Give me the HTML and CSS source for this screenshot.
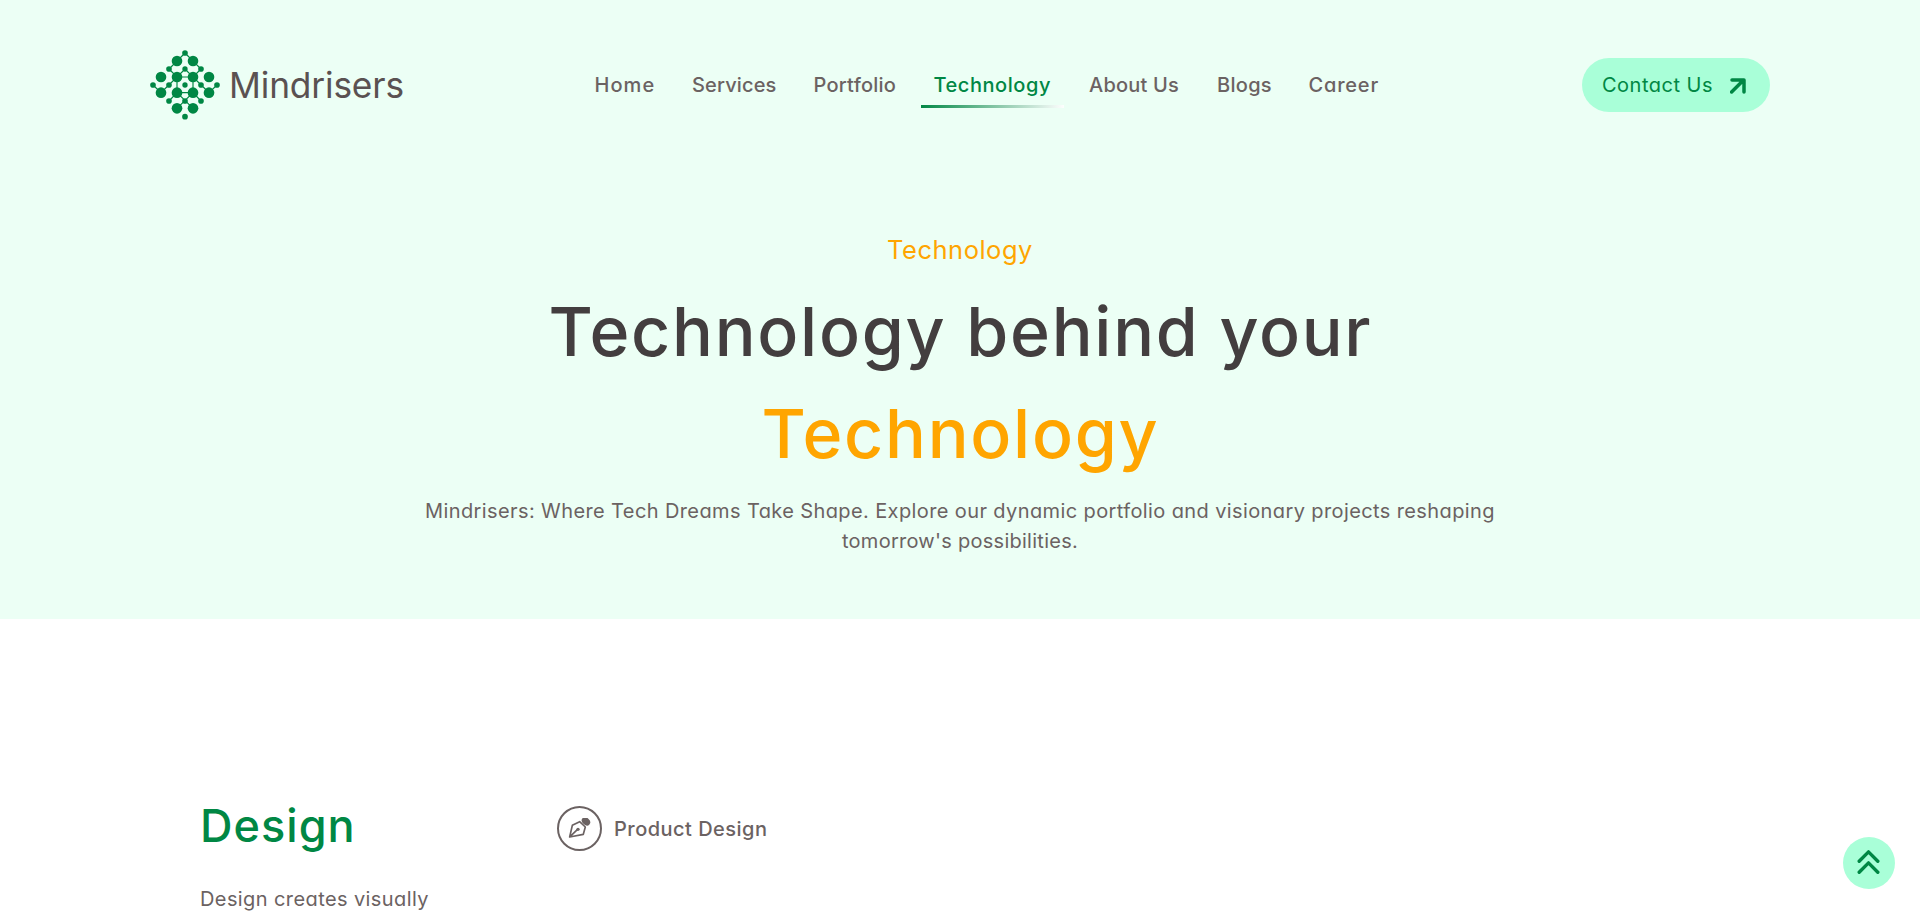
FILE: index.html
```html
<!DOCTYPE html>
<html lang="en">
<head>
<meta charset="utf-8">
<title>Mindrisers | Technology</title>
<link rel="stylesheet" href="styles.css">
</head>
<body>
<div class="hero">
  <header class="header">
    <a class="logo">
      <svg class="logo-mark" viewBox="15 15 210 210">
        <path class="links" d="M120 24 72 72 96 96M120 24l48 48-24 24M96 96l24-24 24 24M96 96h48v47H96zM24 120l24 23 48-47M216 120l-24 23-48-47M72 168l24-25 48 47M168 168l-24-25-48 47"/>
        <g class="dots">
          <circle cx="120" cy="24" r="8.5"/><circle cx="72" cy="72" r="8.5"/><circle cx="120" cy="72" r="8"/><circle cx="168" cy="72" r="8.5"/>
          <circle cx="24" cy="120" r="8.5"/><circle cx="72" cy="120" r="8.5"/><circle cx="120" cy="120" r="8"/><circle cx="168" cy="120" r="8.5"/><circle cx="216" cy="120" r="8.5"/>
          <circle cx="72" cy="168" r="8.5"/><circle cx="120" cy="168" r="8.5"/><circle cx="168" cy="168" r="8.5"/><circle cx="120" cy="215" r="8.5"/>
          <circle cx="96" cy="48" r="16"/><circle cx="144" cy="48" r="16"/>
          <circle cx="48" cy="96" r="16"/><circle cx="96" cy="96" r="16"/><circle cx="144" cy="96" r="16"/><circle cx="192" cy="96" r="16"/>
          <circle cx="48" cy="143" r="16"/><circle cx="96" cy="143" r="16"/><circle cx="144" cy="143" r="16"/><circle cx="192" cy="143" r="16"/>
          <circle cx="96" cy="190" r="16"/><circle cx="144" cy="190" r="16"/>
        </g>
      </svg>
      <span class="logo-text">Mindrisers</span>
    </a>
    <nav class="nav">
      <a class="nav-item home">Home</a>
      <a class="nav-item services">Services</a>
      <a class="nav-item portfolio">Portfolio</a>
      <a class="nav-item technology active">Technology</a>
      <a class="nav-item about">About Us</a>
      <a class="nav-item blogs">Blogs</a>
      <a class="nav-item career">Career</a>
    </nav>
    <a class="contact">
      <span>Contact Us</span>
      <svg class="contact-arrow" viewBox="0 0 16 16"><path d="M1.6 14 13.6 2M2 2h12v12"/></svg>
    </a>
  </header>
  <div class="intro">
    <p class="eyebrow">Technology</p>
    <h1 class="title">Technology behind your<br><span class="accent">Technology</span></h1>
    <p class="lead">Mindrisers: Where Tech Dreams Take Shape. Explore our dynamic portfolio and visionary projects reshaping<br><span class="lead-end">tomorrow's possibilities.</span></p>
  </div>
</div>
<section class="stack">
  <div class="stack-info">
    <h2 class="stack-title">Design</h2>
    <p class="stack-text">Design creates visually</p>
  </div>
  <div class="tool">
    <span class="tool-icon">
      <svg viewBox="52 58 76 66">
        <path class="nib" d="M60 115 68 80 90 69 107 85 101 107ZM61 114 83 93"/>
        <circle class="nib-hole" cx="85" cy="92" r="5"/>
        <ellipse class="nib-cap" cx="109" cy="68" rx="14" ry="10.5" transform="rotate(42 109 68)"/>
      </svg>
    </span>
    <span class="tool-name">Product Design</span>
  </div>
</section>
<a class="to-top"><svg viewBox="0 0 26 26"><path d="M3.2 11.2 12.5 1.9 21.8 11.2M3.2 22.2 12.5 12.9 21.8 22.2"/></svg></a>
</body>
</html>
```
FILE: styles.css
```css
* { box-sizing: border-box; margin: 0; padding: 0; }
body {
  height: 913px;
  overflow: hidden;
  background: #fff;
  color: #6b6262;
  font: 400 20px/30px Inter, "Open Sans", sans-serif;
  font-feature-settings: "cv11";
}
.hero { height: 619px; background: #ecfff5; }
.header {
  display: grid;
  grid-template-columns: 432px 1fr 188px;
  align-items: center;
  height: 170px;
  padding: 0 150px;
}
.logo { display: flex; align-items: center; gap: 9px; }
.logo-mark { width: 70px; height: 70px; }
.links { fill: none; stroke: #008744; stroke-width: 3.5; }
.dots { fill: #008744; }
.logo-text {
  padding-top: 2px;
  font-size: 35.3px;
  line-height: 42px;
  letter-spacing: -0.15px;
  color: #5a5151;
  font-feature-settings: normal;
}
.nav { display: flex; gap: 12.5px; }
.nav-item {
  height: 46px;
  padding: 8px 0 8px 12.5px;
  font-weight: 500;
  white-space: nowrap;
}
.active {
  color: #008744;
  border-bottom: 3px solid;
  border-image: linear-gradient(to right, #008744, #fff) 1;
}
.home { width: 85px; letter-spacing: 1.05px; }
.services { width: 109px; letter-spacing: 0.14px; }
.portfolio { width: 107.5px; letter-spacing: 0.25px; }
.technology { width: 143px; letter-spacing: 0.55px; }
.about { width: 115.5px; letter-spacing: 0.2px; }
.blogs { width: 79px; letter-spacing: 0.3px; }
.career { width: 95px; letter-spacing: 0.8px; }
.contact {
  display: flex;
  align-items: center;
  justify-content: space-between;
  height: 54px;
  padding: 0 24px 0 20px;
  border-radius: 27px;
  background: #a9ffd8;
  color: #008744;
  letter-spacing: 0.5px;
  white-space: nowrap;
}
.contact-arrow {
  width: 16px;
  height: 16px;
  margin-top: 2px;
  fill: none;
  stroke: #008744;
  stroke-width: 3.5;
  stroke-linecap: round;
  stroke-linejoin: round;
}
.intro { padding-top: 61px; text-align: center; white-space: nowrap; }
.eyebrow {
  font-size: 25.5px;
  line-height: 38px;
  letter-spacing: 0.5px;
  color: #ffa500;
}
.title {
  margin-top: 11px;
  padding-left: 1px;
  font-size: 68px;
  font-weight: 500;
  line-height: 102px;
  letter-spacing: 1.72px;
  color: #433e3f;
}
.accent { color: #ffa500; }
.lead { margin-top: 12px; letter-spacing: 0.39px; }
.lead-end { letter-spacing: 0.265px; }
.stack {
  display: grid;
  grid-template-columns: 357px auto;
  align-items: start;
  justify-content: start;
  padding: 173px 200px 0;
}
.stack-title {
  font-size: 45px;
  font-weight: 500;
  line-height: 68px;
  letter-spacing: 1.05px;
  color: #008744;
}
.stack-text { margin-top: 24px; letter-spacing: 0.4px; }
.tool { display: flex; align-items: center; gap: 12px; padding-top: 14px; }
.tool-icon {
  display: grid;
  place-items: center;
  width: 45px;
  height: 45px;
  border: 2px solid #6b6262;
  border-radius: 50%;
}
.tool-icon svg { width: 25.3px; height: 22px; }
.nib { fill: none; stroke: #6b6262; stroke-width: 5; stroke-linejoin: round; }
.nib-hole, .nib-cap { fill: #6b6262; }
.tool-name { font-weight: 500; letter-spacing: 0.48px; }
.to-top {
  position: fixed;
  right: 25px;
  bottom: 24px;
  display: grid;
  place-items: center;
  width: 52px;
  height: 52px;
  border-radius: 50%;
  background: #a9ffd8;
}
.to-top svg {
  width: 26px;
  height: 26px;
  fill: none;
  stroke: #008744;
  stroke-width: 3.4;
  stroke-linecap: round;
  stroke-linejoin: round;
}
```
